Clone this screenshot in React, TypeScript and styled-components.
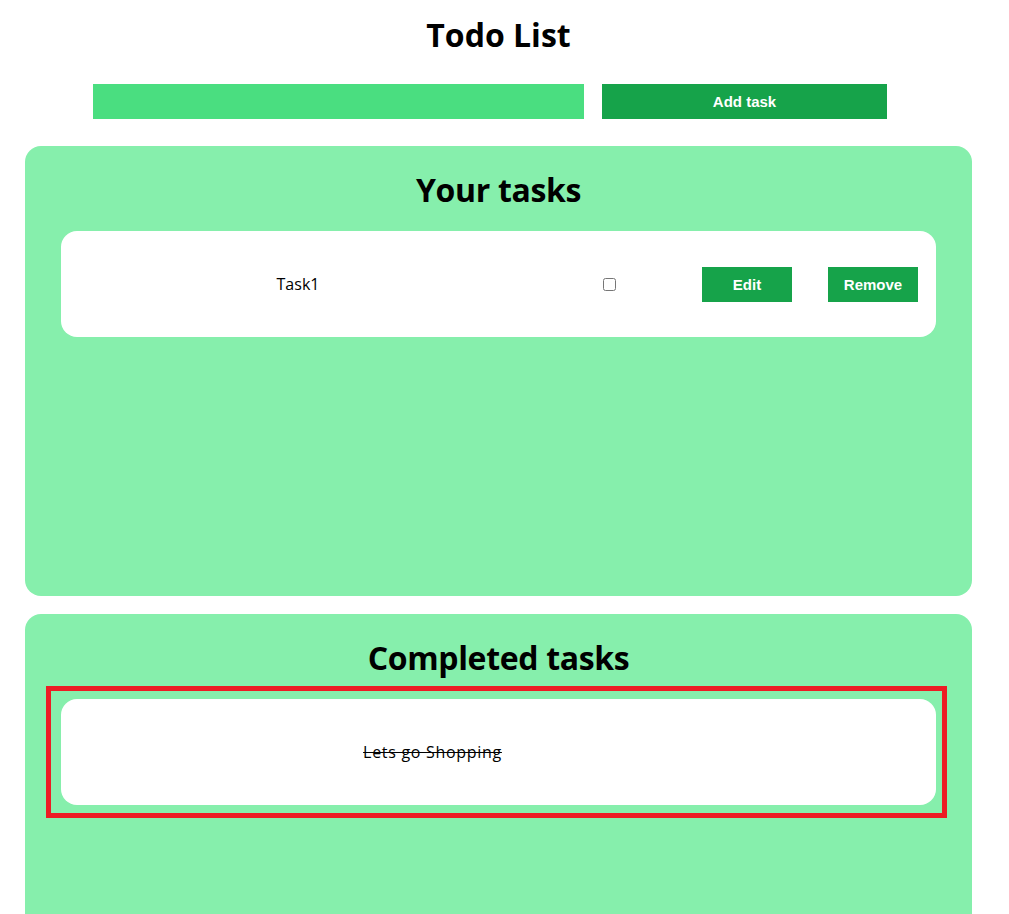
import React from "react";
import styled, { createGlobalStyle } from "styled-components";

const GlobalStyle = createGlobalStyle`
  html, body {
    margin: 0;
    padding: 0;
    background: #ffffff;
    font-family: "Open Sans", "Noto Sans", sans-serif;
    color: #000000;
  }
`;

const Page = styled.div`
  display: flex;
  flex-direction: column;
  padding: 15px 0 0 25px;
  width: 947px;
`;

const Title = styled.h1`
  margin: 0;
  font-size: 32px;
  line-height: 40px;
  font-weight: 700;
  text-align: center;
`;

const Form = styled.form`
  display: flex;
  gap: 18px;
  margin: 29px 0 27px 68px;
`;

const TaskInput = styled.input`
  width: 491px;
  height: 35px;
  box-sizing: border-box;
  border: none;
  outline: none;
  background: #4ade80;
  padding: 0 8px;
  font-size: 16px;
`;

const Button = styled.button<{ $w: number }>`
  width: ${(p) => p.$w}px;
  height: 35px;
  border: none;
  background: #16a34a;
  color: #ffffff;
  font-family: "Liberation Sans", Arial, sans-serif;
  font-weight: 700;
  font-size: 15px;
  cursor: pointer;
  padding: 0;
`;

const Panel = styled.section<{ $h: number }>`
  display: flex;
  flex-direction: column;
  background: #86efac;
  border-radius: 16px;
  min-height: ${(p) => p.$h}px;
  box-sizing: border-box;
  padding: 24px 25px 0 21px;
  margin-bottom: 18px;
`;

const PanelTitle = styled.h2`
  margin: 0 0 8px 4px;
  font-size: 32px;
  line-height: 40px;
  font-weight: 700;
  letter-spacing: -0.35px;
  text-align: center;
`;

const List = styled.div<{ $highlight?: boolean }>`
  display: flex;
  flex-direction: column;
  gap: 12px;
  border: 5px solid ${(p) => (p.$highlight ? "#ed1c24" : "transparent")};
  padding: 8px 6px 8px 10px;
`;

const Card = styled.div`
  display: flex;
  align-items: center;
  height: 106px;
  background: #ffffff;
  border-radius: 16px;
`;

const TaskText = styled.span<{ $w: number; $done?: boolean }>`
  width: ${(p) => p.$w}px;
  text-align: center;
  font-size: 16px;
  letter-spacing: ${(p) => (p.$done ? "0.7px" : "0")};
  text-decoration: ${(p) => (p.$done ? "line-through" : "none")};
`;

const Check = styled.input`
  margin: 0 0 0 68px;
  width: 13px;
  height: 13px;
`;

const RowButton = styled(Button)<{ $ml: number }>`
  margin-left: ${(p) => p.$ml}px;
`;

export default function App() {
  return (
    <>
      <GlobalStyle />
      <Page>
        <Title>Todo List</Title>
        <Form onSubmit={(e) => e.preventDefault()}>
          <TaskInput type="text" />
          <Button $w={285} type="submit">
            Add task
          </Button>
        </Form>
        <Panel $h={450}>
          <PanelTitle>Your tasks</PanelTitle>
          <List>
            <Card>
              <TaskText $w={474}>Task1</TaskText>
              <Check type="checkbox" />
              <RowButton $w={90} $ml={86}>
                Edit
              </RowButton>
              <RowButton $w={90} $ml={36}>
                Remove
              </RowButton>
            </Card>
          </List>
        </Panel>
        <Panel $h={450}>
          <PanelTitle>Completed tasks</PanelTitle>
          <List $highlight>
            <Card>
              <TaskText $w={743} $done>
                Lets go Shopping
              </TaskText>
            </Card>
          </List>
        </Panel>
      </Page>
    </>
  );
}
